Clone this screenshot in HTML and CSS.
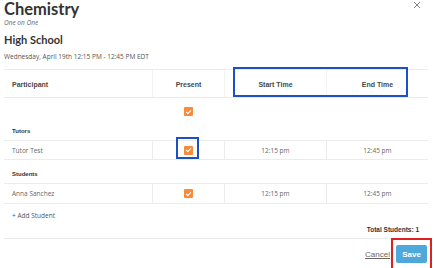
FILE: index.html
```html
<!DOCTYPE html>
<html lang="en">
<head>
    <meta charset="UTF-8">
    <title>Session Attendance</title>
    <link rel="stylesheet" href="styles.css">
</head>
<body>
<div id="modal">
    <span class="close">
        <svg width="8" height="8" viewBox="0 0 8 8"><path d="M1 1L7 7M7 1L1 7" stroke="#777" stroke-width="0.9" fill="none"/></svg>
    </span>
    <header class="info">
        <h1 class="title">Chemistry</h1>
        <div class="subtitle">One on One</div>
        <h2 class="level">High School</h2>
        <div class="date">Wednesday, April 19th 12:15 PM - 12:45 PM EDT</div>
    </header>
    <section class="roster">
        <div class="row head">
            <div class="cell name">Participant</div>
            <div class="cell sep">Present</div>
            <div class="cell sep">Start Time</div>
            <div class="cell sep">End Time</div>
        </div>
        <div class="row all">
            <div class="cell"></div>
            <div class="cell"><span class="check"></span></div>
        </div>
        <div class="row group tutors">Tutors</div>
        <div class="row person tutor">
            <div class="cell name">Tutor Test</div>
            <div class="cell sep"><span class="check"></span></div>
            <div class="cell sep">12:15 pm</div>
            <div class="cell sep">12:45 pm</div>
        </div>
        <div class="row group students">Students</div>
        <div class="row person student">
            <div class="cell name">Anna Sanchez</div>
            <div class="cell sep"><span class="check"></span></div>
            <div class="cell sep">12:15 pm</div>
            <div class="cell sep">12:45 pm</div>
        </div>
        <div class="foot">
            <div class="add">+ Add Student</div>
            <div class="total">Total Students: 1</div>
        </div>
    </section>
    <div class="actions">
        <a class="cancel" href="#">Cancel</a>
        <button class="save">Save</button>
    </div>
    <!-- annotation boxes -->
    <div class="mark mark-times"></div>
    <div class="mark mark-check"></div>
    <div class="mark-save"></div>
</div>
</body>
</html>
```

FILE: styles.css
```css
* {
    margin: 0;
    padding: 0;
    box-sizing: border-box;
}

html, body {
    width: 100%;
    height: 100%;
    overflow: hidden;
    background: #fff;
}

body {
    font-family: "Open Sans", "Liberation Sans", sans-serif;
    color: #555;
}

#modal {
    position: relative;
    width: 435px;
    height: 268px;
}

.close {
    position: absolute;
    right: 14px;
    top: 1px;
    width: 8px;
    height: 8px;
}

.close svg {
    display: block;
}

.info {
    padding: 0 4px;
}

.title {
    font-family: Lato, "Liberation Sans", sans-serif;
    font-size: 16.5px;
    font-weight: 700;
    line-height: 18px;
    color: #333;
}

.subtitle {
    margin-top: 1px;
    font-size: 6.5px;
    font-style: italic;
    line-height: 8px;
    color: #666;
}

.level {
    margin-top: 6px;
    font-family: Lato, "Liberation Sans", sans-serif;
    font-size: 11px;
    font-weight: 700;
    line-height: 13px;
    color: #333;
}

.date {
    margin-top: 6px;
    font-size: 6.5px;
    line-height: 9px;
    color: #555;
}

.roster {
    margin: 8px 7px 0 4px;
    border-top: 1px solid #ececec;
}

.row {
    display: grid;
    grid-template-columns: 148px 72px 102px 102px;
    align-items: stretch;
}

.cell {
    display: flex;
    align-items: center;
    justify-content: center;
}

.cell.name {
    justify-content: flex-start;
    padding-left: 8px;
}

.cell.sep {
    border-left: 1px solid #ececec;
}

.head {
    height: 28px;
    border-bottom: 1px solid #ececec;
    font-family: "Liberation Sans", sans-serif;
    font-size: 7px;
    font-weight: bold;
    color: #484848;
}

.head .cell {
    padding-top: 2px;
}

.head .cell.sep {
    border-left-color: #f2f2f2;
}

.all {
    height: 23px;
}

.all .cell {
    align-items: flex-start;
    padding-top: 9px;
}

.group {
    display: flex;
    align-items: center;
    padding-left: 8px;
    border-bottom: 1px solid #ececec;
    font-family: "Liberation Sans", sans-serif;
    font-size: 6px;
    font-weight: bold;
    color: #333;
}

.tutors {
    height: 20px;
    padding-top: 1px;
}

.students {
    height: 24px;
    padding-top: 5px;
}

.person {
    border-bottom: 1px solid #ececec;
    font-size: 6.5px;
    color: #666;
}

.tutor {
    height: 19px;
}

.student {
    height: 20px;
}

.check {
    display: block;
    width: 9px;
    height: 9px;
    border-radius: 1px;
    background: #f58b3b;
    position: relative;
}

.check::after {
    content: "";
    position: absolute;
    left: 3px;
    top: 1.5px;
    width: 2px;
    height: 4px;
    border: solid #fff;
    border-width: 0 1px 1px 0;
    transform: rotate(45deg);
}

.foot {
    height: 35px;
    border-bottom: 1px solid #ececec;
    display: flex;
    justify-content: space-between;
    padding: 8px 9px 0 8px;
}

.add {
    font-size: 6.5px;
    line-height: 8px;
    color: #555;
}

.total {
    align-self: flex-end;
    margin-bottom: 4px;
    font-family: "Liberation Sans", sans-serif;
    font-size: 6.5px;
    font-weight: bold;
    line-height: 8px;
    color: #333;
}

.actions {
    display: flex;
    justify-content: flex-end;
    align-items: center;
    gap: 6px;
    padding: 6px 8px 0 0;
}

.cancel {
    font-family: "Liberation Sans", sans-serif;
    font-size: 8px;
    color: #666;
    text-decoration: underline;
}

.save {
    width: 31px;
    height: 18px;
    border: none;
    border-radius: 2px;
    background: #4ea8dc;
    color: #fff;
    font-family: "Liberation Sans", sans-serif;
    font-size: 8px;
    font-weight: bold;
}

.mark {
    position: absolute;
    border: 2px solid #1c4fc8;
}

.mark-times {
    left: 233px;
    top: 67px;
    width: 175px;
    height: 30px;
}

.mark-check {
    left: 176px;
    top: 137px;
    width: 23px;
    height: 22px;
}

.mark-save {
    position: absolute;
    left: 391px;
    top: 238px;
    width: 41px;
    height: 32px;
    border: 2px solid #e02020;
}
```
